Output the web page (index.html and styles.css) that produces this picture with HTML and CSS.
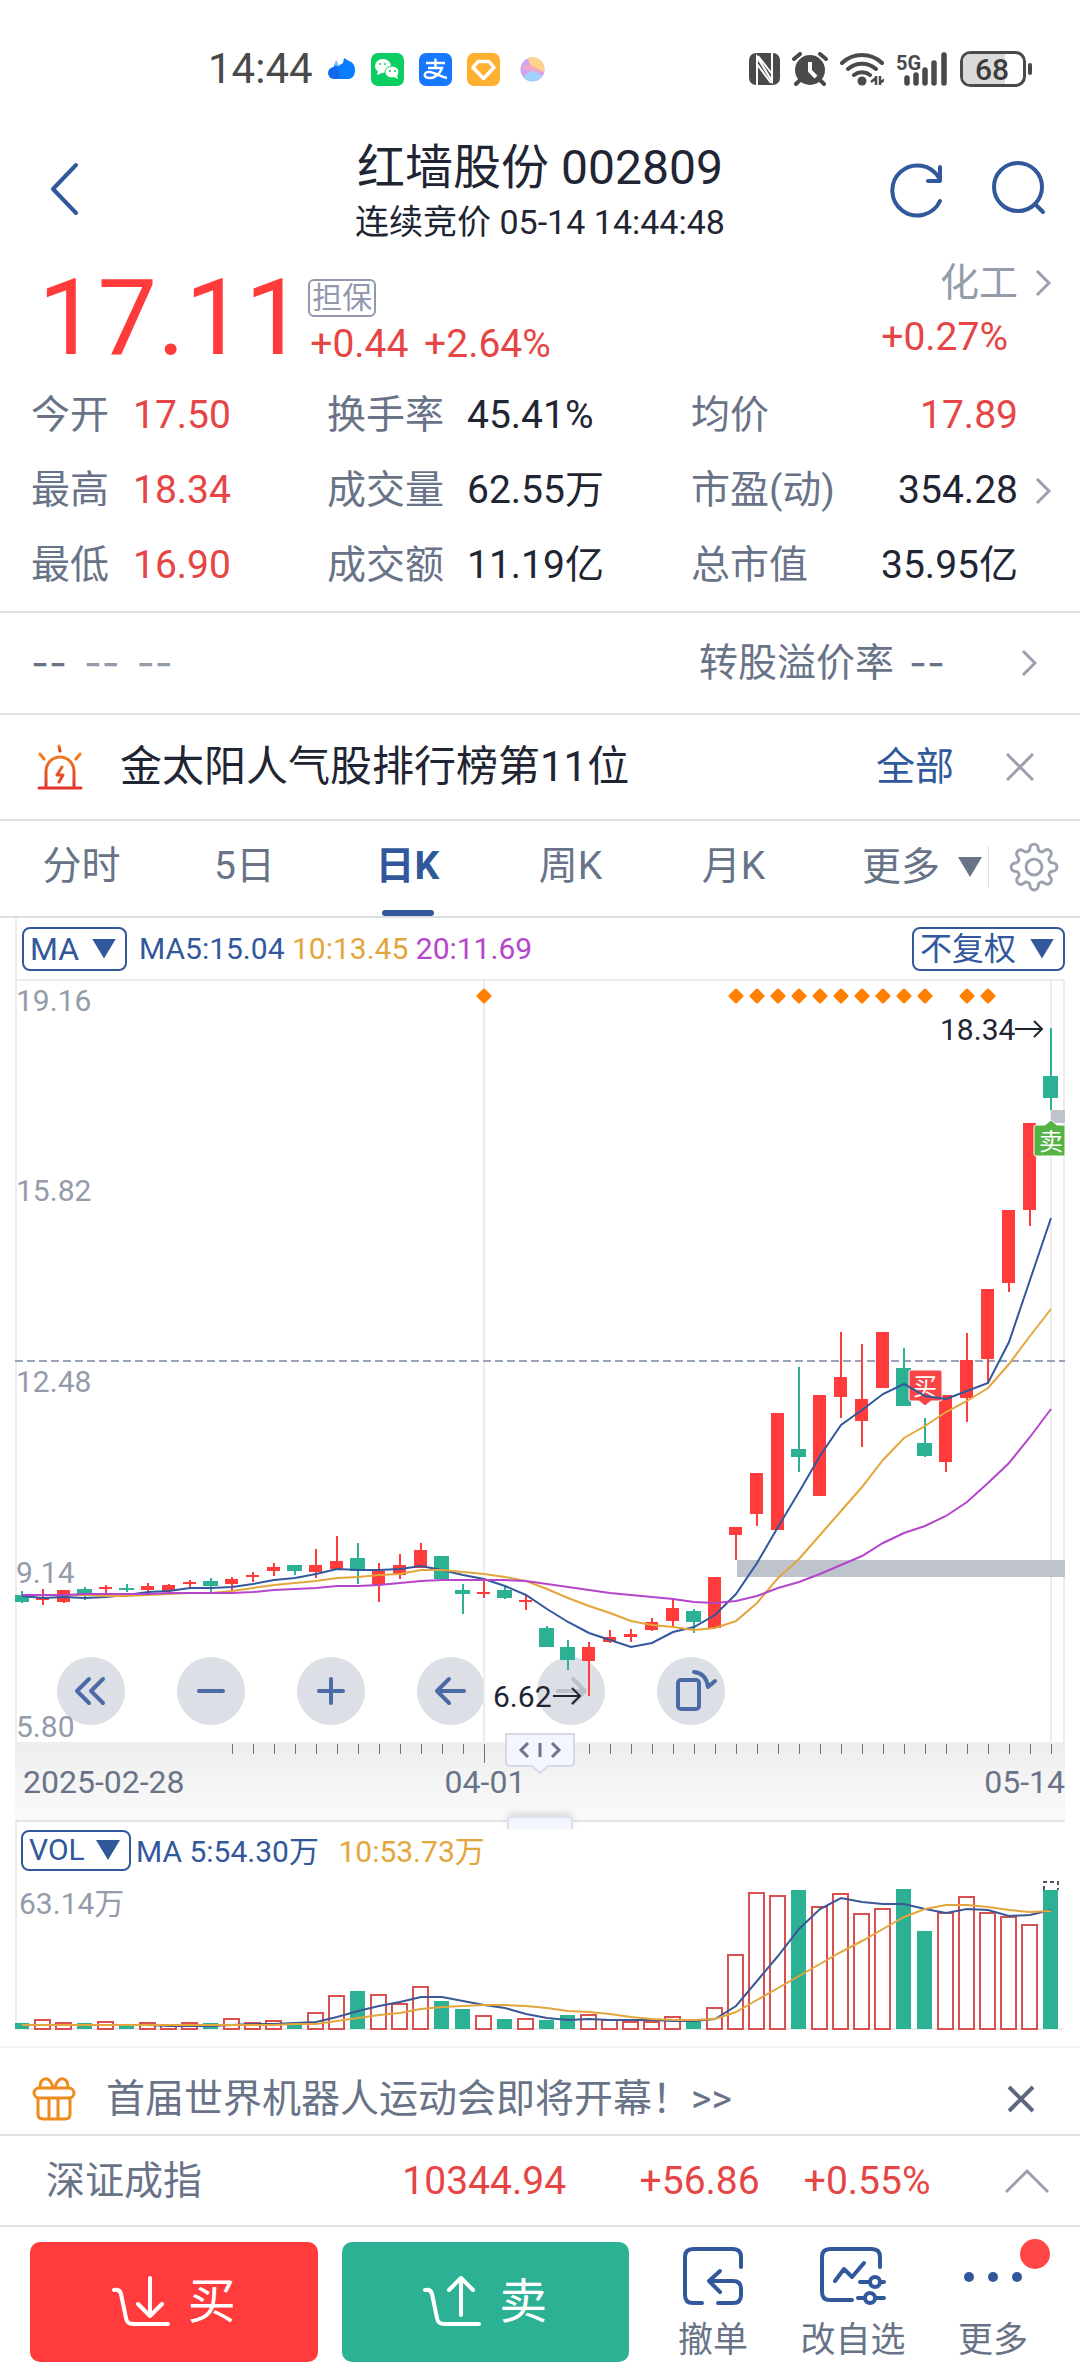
FILE: index.html
```
<!DOCTYPE html>
<html lang="zh-CN">
  <head>
    <meta charset="utf-8">
    <meta name="viewport" content="width=device-width, initial-scale=1.0">
    <title>红墙股份 002809</title>
    <link rel="stylesheet" href="styles.css">
  </head>

  <body>
    <div class="status-bar">
      <div class="status-left">
        <span class="clock">14:44</span>
        <svg width="28" height="24" viewBox="0 0 28 24"><path d="M7 22a6 6 0 0 1-2-11l2-5 3 3 5-3 1-5 5 3c4 1 6 5 6 9 0 6-3 9-7 9z" fill="#0a7cff"/><circle cx="6" cy="16" r="6" fill="#1268e8"/><path d="M6 9l2-6 3 5z" fill="#7cc0f5"/></svg>
        <svg width="33" height="33" viewBox="0 0 33 33"><rect width="33" height="33" rx="7" fill="#0bce62"/><ellipse cx="12" cy="13" rx="8" ry="7" fill="#fff"/><path d="M7 18l-1 4 5-2z" fill="#fff"/><ellipse cx="21" cy="19" rx="7" ry="6" fill="#fff" stroke="#0bce62"/><path d="M23 24l4 2-1-4z" fill="#fff"/><g fill="#0bce62"><circle cx="9" cy="11" r="1"/><circle cx="14" cy="11" r="1"/><circle cx="19" cy="18" r="1"/><circle cx="24" cy="18" r="1"/></g></svg>
        <svg width="33" height="33" viewBox="0 0 33 33"><rect width="33" height="33" rx="7" fill="#1677ff"/><path d="M7 10h19M16.500 5.500v9M9 15h14c-2 6-7 10-12 10-8 0-6-7 0-6 5 1 10 4 17 6" fill="none" stroke="#fff" stroke-width="2.400"/></svg>
        <svg width="33" height="33" viewBox="0 0 33 33"><rect width="33" height="33" rx="7" fill="#ffb02e"/><path d="M11 8.500h11l5 6-10.500 11L6 14.500z" fill="none" stroke="#fff" stroke-width="3.500" stroke-linejoin="round"/></svg>
        <svg class="orb" width="25" height="25" viewBox="0 0 25 25"><circle cx="12.500" cy="12.500" r="12" fill="#cfa3f0"/><path d="M8 1a12 12 0 0 1 16 14L10 8z" fill="#ffd38a"/><path d="M1 9l9-1 14 7-10 2z" fill="#f7a6c4"/><path d="M3 20l9-7 10 6a12 12 0 0 1-19 1z" fill="#9fd4ff"/></svg>
      </div>
      <div class="status-right">
        <svg width="31" height="32" viewBox="0 0 31 32"><rect width="31" height="32" rx="7" fill="#4a4a4a"/><path d="M8 32V4l15 24V0M8 11l14 19M9 3l14 18" fill="none" stroke="#fff" stroke-width="2"/></svg>
        <svg width="36" height="34" viewBox="0 0 36 34"><circle cx="18" cy="18" r="15" fill="#4a4a4a"/><path d="M2 7l6-5M34 7l-6-5M8 28l-4 4M28 28l4 4" stroke="#4a4a4a" stroke-width="4" stroke-linecap="round"/><path d="M18 10v9l6 6" fill="none" stroke="#fff" stroke-width="4"/></svg>
        <svg width="44" height="34" viewBox="0 0 44 34"><g fill="none" stroke="#4a4a4a" stroke-width="4" stroke-linecap="round"><path d="M2 11a29 29 0 0 1 40 0M8 17a21 21 0 0 1 28 0M14 23a13 13 0 0 1 16 0"/></g><circle cx="22" cy="29" r="4.500" fill="#4a4a4a"/><path d="M36 24v9M40 24v9M31 30l5-4M45 27l-5 4" stroke="#4a4a4a" stroke-width="2.500"/></svg>
        <svg class="signal" width="52" height="36" viewBox="0 0 52 36"><text x="0" y="19">5G</text><path d="M11 27v5M20 24v8M29 19v13M38 12v20M48 4v28" stroke="#4a4a4a" stroke-width="5.500" stroke-linecap="round"/></svg>
        <svg class="battery" width="74" height="36" viewBox="0 0 74 36"><rect x="1.500" y="1.500" width="63" height="33" rx="9" fill="#fff" stroke="#4a4a4a" stroke-width="3"/><path d="M10 3h35v30H10a7 7 0 0 1-7-7V10a7 7 0 0 1 7-7z" fill="#dadada"/><text x="15" y="29">68</text><path d="M70 14v8" stroke="#4a4a4a" stroke-width="4" stroke-linecap="round"/></svg>
      </div>
    </div>

    <header class="title-bar">
      <button class="icon-btn" aria-label="返回"><svg width="32" height="54" viewBox="0 0 32 54"><path d="M28 3L5 27l23 24" class="line"/></svg></button>
      <div class="title">
        <h1>红墙股份 002809</h1>
        <p>连续竞价 05-14 14:44:48</p>
      </div>
      <div class="title-tools">
        <button class="icon-btn" aria-label="刷新"><svg width="56" height="58" viewBox="0 0 56 58"><path d="M51 41A25 25 0 1 1 50 18M51 7v14H39" class="line"/></svg></button>
        <button class="icon-btn" aria-label="搜索"><svg width="56" height="58" viewBox="0 0 56 58"><circle cx="27" cy="27" r="24" class="line"/><path d="M44 44l8 8" class="line"/></svg></button>
      </div>
    </header>

    <section class="quote">
      <strong class="price">17.11</strong>
      <div class="change">
        <span class="tag">担保</span>
        <p>+0.44 <span>+2.64%</span></p>
      </div>
      <a class="industry" href="#industry">
        <span>化工</span>
        <em>+0.27%</em>
        <svg class="chevron" width="16" height="28" viewBox="0 0 16 28"><path d="M2 2l12 12L2 26"/></svg>
      </a>
    </section>

    <section class="stats">
      <dl>
        <div><dt>今开</dt><dd class="up">17.50</dd></div>
        <div><dt>最高</dt><dd class="up">18.34</dd></div>
        <div><dt>最低</dt><dd class="up">16.90</dd></div>
      </dl>
      <dl>
        <div><dt>换手率</dt><dd>45.41%</dd></div>
        <div><dt>成交量</dt><dd>62.55万</dd></div>
        <div><dt>成交额</dt><dd>11.19亿</dd></div>
      </dl>
      <dl class="spread">
        <div><dt>均价</dt><dd class="up">17.89</dd></div>
        <div><dt>市盈(动)</dt><dd>354.28</dd></div>
        <div><dt>总市值</dt><dd>35.95亿</dd></div>
      </dl>
      <a href="#detail" aria-label="更多指标"><svg class="chevron" width="16" height="28" viewBox="0 0 16 28"><path d="M2 2l12 12L2 26"/></svg></a>
    </section>

    <a class="row bond" href="#bond">
      <span class="dashes"><b>--</b><i>--</i><i>--</i></span>
      <span class="premium">转股溢价率<b>--</b></span>
      <svg class="chevron" width="16" height="28" viewBox="0 0 16 28"><path d="M2 2l12 12L2 26"/></svg>
    </a>

    <section class="row notice">
      <svg width="46" height="46" viewBox="0 0 46 46">
        <defs><linearGradient id="alarm" x1="0" y1="0" x2="0" y2="1"><stop offset="0" stop-color="#f08020"/><stop offset="1" stop-color="#e0352b"/></linearGradient></defs>
        <g fill="none" stroke="url(#alarm)" stroke-width="3" stroke-linecap="round" stroke-linejoin="round"><path d="M9 43V27a14 14 0 0 1 28 0v16M2 44h42M3 10l4 5M43 10l-4 5M25 23l-5 8h6l-4 7"/><path d="M22 2l1 5"/></g>
      </svg>
      <p>金太阳人气股排行榜第11位</p>
      <a href="#all">全部</a>
      <button class="icon-btn" aria-label="关闭"><svg class="close" width="28" height="28" viewBox="0 0 28 28"><path d="M1 1l26 26M27 1L1 27"/></svg></button>
    </section>

    <nav class="tabs">
      <button>分时</button>
      <button>5日</button>
      <button class="active">日K</button>
      <button>周K</button>
      <button>月K</button>
      <div class="tabs-more">
        <button class="more">更多</button>
        <button class="icon-btn" aria-label="设置"><svg class="gear" width="50" height="50" viewBox="0 0 24 24"><circle cx="12" cy="12" r="3.800"/><path d="M19.4 15a1.65 1.65 0 0 0 .33 1.82l.06.06a2 2 0 0 1 0 2.83 2 2 0 0 1-2.83 0l-.06-.06a1.65 1.65 0 0 0-1.82-.33 1.65 1.65 0 0 0-1 1.51V21a2 2 0 0 1-2 2 2 2 0 0 1-2-2v-.09A1.65 1.65 0 0 0 9 19.4a1.65 1.65 0 0 0-1.82.33l-.06.06a2 2 0 0 1-2.83 0 2 2 0 0 1 0-2.83l.06-.06a1.65 1.65 0 0 0 .33-1.82 1.65 1.65 0 0 0-1.51-1H3a2 2 0 0 1-2-2 2 2 0 0 1 2-2h.09A1.65 1.65 0 0 0 4.6 9a1.65 1.65 0 0 0-.33-1.82l-.06-.06a2 2 0 0 1 0-2.83 2 2 0 0 1 2.83 0l.06.06a1.65 1.65 0 0 0 1.82.33H9a1.65 1.65 0 0 0 1-1.51V3a2 2 0 0 1 2-2 2 2 0 0 1 2 2v.09a1.65 1.65 0 0 0 1 1.51 1.65 1.65 0 0 0 1.82-.33l.06-.06a2 2 0 0 1 2.83 0 2 2 0 0 1 0 2.83l-.06.06a1.65 1.65 0 0 0-.33 1.82V9a1.65 1.65 0 0 0 1.51 1H21a2 2 0 0 1 2 2 2 2 0 0 1-2 2h-.09a1.65 1.65 0 0 0-1.51 1z"/></svg></button>
      </div>
    </nav>

    <section class="chart">
      <div class="legend">
        <label class="picker pick-ma"><select aria-label="主图指标"><option>MA</option></select></label>
        <p><span class="ma5">MA5:15.04</span> <span class="ma10">10:13.45</span> <span class="ma20">20:11.69</span></p>
        <label class="picker pick-adj"><select aria-label="复权"><option>不复权</option></select></label>
      </div>

      <div class="plot">
        <div class="plot-tools">
          <button aria-label="最早"><svg viewBox="0 0 68 68"><path d="M32 22L20 34l12 12M46 22L34 34l12 12"/></svg></button>
          <button aria-label="缩小"><svg viewBox="0 0 68 68"><path d="M22 34h24"/></svg></button>
          <button aria-label="放大"><svg viewBox="0 0 68 68"><path d="M22 34h24M34 22v24"/></svg></button>
          <button aria-label="左移"><svg viewBox="0 0 68 68"><path d="M47 34H21M32 22L20 34l12 12"/></svg></button>
          <button aria-label="右移" class="off"><svg viewBox="0 0 68 68"><path d="M21 34h26M36 22l12 12-12 12"/></svg></button>
          <button aria-label="横屏"><svg viewBox="0 0 68 68"><rect x="21" y="23" width="21" height="29" rx="3"/><path d="M37 15c9 1 13 7 14 15M51 30l7-6"/></svg></button>
        </div>
        <svg id="kline" viewBox="15 981 1050 761"></svg>
      </div>

      <div class="axis">
        <svg id="ticks" viewBox="15 1742 1050 24"></svg>
        <div class="dates"><span>2025-02-28</span><span class="mid">04-01</span><span>05-14</span></div>
        <svg class="handle" width="76" height="48" viewBox="0 0 76 48"><path d="M4 3h68v28q0 4-4 4H46l-8 7-8-7H8q-4 0-4-4z" fill="#f3f6fe" stroke="#d5d9e2" stroke-width="2"/><path d="M26 12l-7 7 7 7M38 12v14M50 12l7 7-7 7" fill="none" stroke="#6b7489" stroke-width="3"/></svg>
        <span class="grip"></span>
      </div>

      <div class="legend vol-legend">
        <label class="picker pick-vol"><select aria-label="副图指标"><option>VOL</option></select></label>
        <p><span class="ma5">MA 5:54.30万</span> <span class="ma10">10:53.73万</span></p>
      </div>
      <svg id="volume" viewBox="15 1881 1050 149"></svg>
    </section>

    <section class="row promo">
      <svg width="44" height="44" viewBox="0 0 44 44"><g fill="none" stroke="#ef8a1d" stroke-width="3" stroke-linejoin="round"><rect x="2" y="11" width="40" height="10" rx="5"/><path d="M6 21v16q0 5 5 5h22q5 0 5-5V21M17 22v19M26 22v19M8 11c0-11 9-13 13-1l1 1 1-1c4-12 13-10 13 1"/></g></svg>
      <a href="#promo">首届世界机器人运动会即将开幕！&gt;&gt;</a>
      <button class="icon-btn" aria-label="关闭"><svg class="close bold" width="28" height="28" viewBox="0 0 28 28"><path d="M2 2l24 24M26 2L2 26"/></svg></button>
    </section>

    <section class="row index">
      <span>深证成指</span>
      <span class="up">10344.94</span>
      <span class="up">+56.86</span>
      <span class="up">+0.55%</span>
      <button class="icon-btn" aria-label="展开"><svg class="chevron" width="44" height="26" viewBox="0 0 44 26"><path d="M1 24L22 3l21 21"/></svg></button>
    </section>

    <footer class="actions">
      <button class="trade buy"><svg width="58" height="52" viewBox="0 0 58 52"><path d="M2 14q6-1 7 4l5 24q1 6 7 6h35M38 2v37M26 28l12 12 12-12"/></svg>买</button>
      <button class="trade sell"><svg width="58" height="52" viewBox="0 0 58 52"><path d="M2 14q6-1 7 4l5 24q1 6 7 6h35M38 39V2M26 14L38 2l12 12"/></svg>卖</button>
      <div class="menu">
        <button><svg width="60" height="60" viewBox="0 0 60 60"><path d="M19 56H10q-8 0-8-8V10q0-8 8-8h40q8 0 8 8v10M35 56h15q8 0 8-8v-6q0-8-8-8H26M37 24L26 34l11 11"/></svg>撤单</button>
        <button><svg width="66" height="60" viewBox="0 0 66 60"><path d="M32 53H10q-8 0-8-8V10q0-8 8-8h42q8 0 8 8v10M15 34l9-12 8 8 12-14M40 35h9M61 35h3M38 51h6M56 51h8"/><circle cx="55" cy="35" r="5"/><circle cx="50" cy="51" r="5"/></svg>改自选</button>
        <button class="has-dot"><svg width="60" height="60" viewBox="0 0 60 60"><g class="dots"><circle cx="6" cy="30" r="5"/><circle cx="30" cy="30" r="5"/><circle cx="54" cy="30" r="5"/></g></svg>更多</button>
      </div>
    </footer>

    <script src="chart.js"></script>
  </body>
</html>
```

FILE: styles.css
```
* {
  box-sizing: border-box;
  margin: 0;
  padding: 0;
}

body {
  font-family: Roboto, "Noto Sans CJK SC", sans-serif;
  font-size: 39px;
  line-height: 48px;
  color: #1f2533;
  background: #fff;
}

a {
  color: inherit;
  text-decoration: none;
}

button, select {
  font: inherit;
  color: inherit;
  background: none;
  border: 0;
}

em, i {
  font-style: normal;
}

svg {
  display: block;
  flex: none;
}

.up {
  color: #e64545;
}

.icon-btn {
  display: flex;
}

.line {
  fill: none;
  stroke: #32589c;
  stroke-width: 4;
  stroke-linecap: round;
  stroke-linejoin: round;
}

.chevron path, .close path {
  fill: none;
  stroke: #9a9ead;
  stroke-width: 3;
}

.close.bold path {
  stroke: #5c667c;
  stroke-width: 4;
}

/* status bar */

.status-bar {
  display: flex;
  justify-content: space-between;
  align-items: center;
  height: 138px;
  padding: 0 46px 0 208px;
}

.status-left, .status-right {
  display: flex;
  align-items: center;
  gap: 15px;
}

.clock {
  font-size: 42px;
  color: #4a4a4a;
}

.orb {
  margin-left: 5px;
}

.status-right {
  gap: 12px;
}

.signal text {
  font-size: 20px;
  font-weight: 700;
  fill: #4a4a4a;
}

.battery text {
  font-size: 30px;
  font-weight: 500;
  fill: #3c3c3c;
}

/* title */

.title-bar {
  display: grid;
  grid-template-columns: 1fr auto 1fr;
  height: 108px;
  padding: 0 33px;
}

.title-bar .icon-btn {
  align-self: start;
  padding-top: 22px;
}

.title-bar > .icon-btn {
  padding-top: 24px;
  padding-left: 15px;
}

.title {
  text-align: center;
}

.title h1 {
  font-size: 48px;
  font-weight: 400;
  line-height: 60px;
}

.title p {
  font-size: 34px;
  line-height: 48px;
}

.title-tools {
  display: flex;
  justify-content: flex-end;
  gap: 46px;
}

/* price */

.quote {
  display: flex;
  height: 130px;
  padding: 0 29px 0 38px;
}

.price {
  margin-top: 14px;
  font-size: 106px;
  font-weight: 400;
  line-height: 116px;
  color: #ff3b3b;
}

.change {
  padding: 33px 0 0 4px;
}

.tag {
  display: block;
  width: 68px;
  height: 38px;
  border: 2px solid #9498ae;
  border-radius: 6px;
  font-size: 30px;
  line-height: 34px;
  text-align: center;
  color: #9498ae;
}

.change p {
  padding-left: 2px;
  line-height: 54px;
  color: #e64545;
}

.change p span {
  margin-left: 6px;
}

.industry {
  display: grid;
  grid-template-columns: auto 16px;
  grid-template-rows: 48px 60px;
  column-gap: 17px;
  align-items: center;
  margin-left: auto;
  padding-top: 13px;
  text-align: right;
  color: #949baa;
}

.industry em {
  grid-row: 2;
  padding-right: 10px;
  color: #e64545;
}

.industry .chevron {
  grid-column: 2;
  grid-row: 1;
}

.stats {
  display: grid;
  grid-template-columns: 296fr 364fr 344fr 16px;
  align-items: center;
  padding: 2px 29px 8px 31px;
  border-bottom: 2px solid #e2e3e6;
}

.stats dl div {
  display: flex;
  height: 75px;
  line-height: 75px;
}

.stats dt {
  width: 102px;
  color: #697388;
}

.stats dl:nth-child(2) dt {
  width: 140px;
}

.stats .spread div {
  justify-content: space-between;
}

.stats .spread {
  padding-right: 17px;
}

.stats .spread dt {
  width: auto;
}

/* full width rows */

.row {
  display: flex;
  align-items: center;
  border-bottom: 2px solid #e2e3e6;
}

.bond {
  height: 102px;
  padding: 0 43px 0 31px;
  gap: 76px;
  color: #697388;
}

.bond b, .bond i {
  font-family: Inter, sans-serif;
  font-weight: 400;
}

.dashes {
  display: flex;
  flex: 1;
  gap: 17px;
}

.dashes i {
  color: #949baa;
}

.premium {
  display: flex;
  gap: 15px;
}

.notice {
  height: 106px;
  padding: 0 46px 0 37px;
}

.notice p {
  flex: 1;
  padding-left: 37px;
  font-size: 42px;
}

.notice a {
  padding-right: 52px;
  color: #32589c;
}

/* period tabs */

.tabs {
  display: grid;
  grid-template-columns: repeat(5, 163fr) 265fr;
  height: 97px;
  border-bottom: 2px solid #dcdee2;
  color: #697388;
}

.tabs > button {
  position: relative;
  padding-bottom: 5px;
}

.tabs .active {
  font-weight: 700;
  color: #32589c;
}

.tabs .active::after {
  content: '';
  position: absolute;
  bottom: 0;
  left: 50%;
  width: 52px;
  height: 6px;
  margin-left: -26px;
  border-radius: 3px;
  background: #32589c;
}

.tabs-more {
  display: flex;
  justify-content: space-between;
  align-items: center;
  padding: 0 21px 3px 47px;
}

.more {
  display: flex;
  align-items: center;
  gap: 18px;
  height: 42px;
  padding-right: 6px;
  border-right: 1px solid #dcdee2;
}

.more::after, .picker::after {
  content: '';
  width: 24px;
  height: 20px;
  background: #697388;
  clip-path: polygon(0 0, 100% 0, 50% 100%);
}

.gear {
  fill: none;
  stroke: #9ba1b0;
  stroke-width: 1.4;
}

/* charts */

.chart {
  margin: 0 15px;
}

.legend {
  display: flex;
  align-items: center;
  height: 63px;
  padding-left: 5px;
  border: 2px solid #ececee;
  border-top: 0;
  border-right: 0;
  font-size: 30px;
}

.legend p {
  flex: 1;
  padding-left: 12px;
}

.picker {
  display: flex;
  align-items: center;
  justify-content: space-between;
  height: 44px;
  padding: 0 9px 0 6px;
  border: 2px solid #32589c;
  border-radius: 8px;
  color: #32589c;
}

.picker::after {
  background: #32589c;
}

.picker select {
  flex: 1;
  min-width: 0;
  appearance: none;
}

.pick-ma {
  width: 105px;
  font-size: 32px;
}

.pick-adj {
  width: 153px;
  font-size: 32px;
}

.pick-vol {
  width: 110px;
  height: 41px;
}

.ma5 { color: #32589c; }
.ma10 { color: #e3a63c; }
.ma20 { color: #b546cb; }

.plot {
  position: relative;
}

.plot-tools {
  position: absolute;
  left: 4%;
  bottom: 17px;
  display: flex;
  gap: 52px;
}

.plot-tools button {
  width: 68px;
  height: 68px;
  border-radius: 50%;
  background: #dddfe6;
}

.plot-tools svg {
  fill: none;
  stroke: #4b6aa6;
  stroke-width: 4;
  stroke-linecap: round;
  stroke-linejoin: round;
}

.plot-tools .off svg {
  stroke: #bcc0cb;
}

#kline {
  position: relative;
  width: 100%;
  pointer-events: none;
}

#volume, #ticks {
  width: 100%;
}

#kline text, #volume text {
  font-size: 30px;
  fill: #949baa;
}

#kline .mark {
  fill: #1f2533;
}

#kline .deal {
  font-size: 24px;
  fill: #fff;
}

.axis {
  position: relative;
  height: 78px;
  background: linear-gradient(#eeeeee, #fafafa);
}

.dates {
  display: grid;
  grid-template-columns: 1fr auto 1fr;
  padding: 0 0 0 8px;
  font-size: 32px;
  line-height: 32px;
  color: #697388;
}

.dates span:last-child {
  text-align: right;
}

.dates .mid {
  padding-right: 118px;
}

.handle {
  position: absolute;
  left: 50%;
  top: -11px;
  margin-left: -38px;
}

.grip {
  position: absolute;
  left: 50%;
  bottom: -9px;
  width: 66px;
  height: 13px;
  margin-left: -33px;
  border: 2px solid #dde1ea;
  border-bottom: 0;
  border-radius: 5px 5px 0 0;
  background: #f3f6fe;
  box-shadow: 0 -3px 6px #d9d9d9;
}

.vol-legend {
  height: 61px;
  padding: 0 0 3px 4px;
  border-top: 2px solid #e2e3e6;
  border-bottom: 0;
}

.vol-legend p {
  padding: 4px 0 0 5px;
}

.vol-legend .ma10 {
  margin-left: 12px;
}

.promo {
  height: 90px;
  margin-top: 16px;
  padding: 16px 45px 0 32px;
  border-top: 2px solid #f3f3f5;
  color: #697388;
}

.promo a {
  flex: 1;
  padding-left: 30px;
}

.index {
  display: grid;
  grid-template-columns: 356fr 237fr 164fr 201fr 44px;
  height: 91px;
  padding: 0 31px 0 46px;
  color: #697388;
}

.index .up {
  color: #e64545;
}

/* bottom bar */

.actions {
  display: flex;
  gap: 24px;
  padding: 15px 17px 14px 30px;
}

.trade {
  display: flex;
  flex: 1;
  align-items: center;
  justify-content: center;
  gap: 18px;
  height: 120px;
  border-radius: 10px;
  font-size: 48px;
  color: #fff;
}

.trade svg {
  fill: none;
  stroke: #fff;
  stroke-width: 4;
  stroke-linecap: round;
  stroke-linejoin: round;
}

.buy {
  background: #ff3b3b;
}

.sell {
  background: #2db195;
}

.menu {
  display: grid;
  grid-template-columns: repeat(3, 140px);
  margin-left: -10px;
  font-size: 35px;
  line-height: 42px;
  color: #697388;
}

.menu button {
  position: relative;
  display: flex;
  flex-direction: column;
  align-items: center;
  gap: 13px;
  padding-top: 5px;
}

.menu svg {
  fill: none;
  stroke: #32589c;
  stroke-width: 4;
  stroke-linecap: round;
  stroke-linejoin: round;
}

.menu .dots {
  fill: #32589c;
  stroke: none;
}

.has-dot::after {
  content: '';
  position: absolute;
  top: -3px;
  right: 13px;
  width: 30px;
  height: 30px;
  border-radius: 50%;
  background: #ff4747;
}
```

FILE: chart.js
```
// one trading day every 21 units, y grows downwards
var FIRST = 22, STEP = 21;
var RED = '#ff3b3b', GREEN = '#2db195';

// colour, high, body top, body bottom, low, top of the volume bar
var days = [
  ['g',1591,1595,1602,1603,2023], ['r',1589,1597,1600,1605,2019], ['r',1590,1590,1602,1603,2022],
  ['g',1587,1589,1594,1600,2023], ['r',1585,1587,1589,1594,2021], ['g',1584,1588,1590,1592,2024],
  ['r',1583,1586,1590,1592,2022], ['r',1584,1585,1591,1592,2024], ['r',1580,1582,1584,1587,2022],
  ['g',1578,1581,1586,1594,2023], ['r',1577,1579,1584,1591,2018], ['r',1572,1575,1577,1582,2022],
  ['r',1563,1567,1571,1576,2020], ['g',1565,1565,1571,1575,2024], ['r',1549,1565,1572,1578,2012],
  ['r',1536,1561,1569,1569,1995], ['g',1543,1558,1571,1584,1991], ['r',1563,1571,1585,1602,1994],
  ['r',1554,1565,1575,1579,2003], ['r',1543,1550,1568,1568,1986], ['g',1556,1556,1579,1581,2001],
  ['g',1584,1590,1594,1614,2009], ['r',1580,1592,1593,1598,2015], ['g',1586,1590,1598,1599,2019],
  ['r',1595,1600,1602,1610,2018], ['g',1626,1628,1647,1647,2020], ['g',1640,1647,1660,1670,2015],
  ['r',1642,1647,1661,1696,2014], ['r',1630,1637,1642,1643,2019], ['r',1629,1634,1637,1642,2021],
  ['r',1618,1622,1630,1631,2021], ['r',1599,1608,1621,1627,2016], ['g',1609,1611,1622,1633,2021],
  ['r',1577,1577,1628,1628,2007], ['r',1527,1527,1535,1560,1954], ['r',1473,1473,1514,1526,1892],
  ['r',1413,1413,1530,1530,1895], ['g',1367,1449,1457,1472,1890], ['r',1395,1395,1496,1496,1906],
  ['r',1332,1377,1397,1418,1893], ['r',1344,1399,1421,1447,1913], ['r',1332,1332,1388,1388,1908],
  ['g',1348,1368,1406,1406,1889], ['g',1418,1443,1456,1457,1931], ['r',1395,1395,1462,1472,1912],
  ['r',1333,1360,1398,1422,1896], ['r',1289,1289,1359,1382,1912], ['r',1210,1210,1283,1292,1916],
  ['r',1123,1123,1210,1226,1924], ['g',1028,1076,1098,1110,1890]
];

var ma5 = [1596,1598,1597,1598,1597,1595,1592,1591,1588,1588,1587,1584,1580,1578,1574,1569,1570,1570,1569,1566,1570,1575,1579,1586,1595,1609,1622,1633,1640,1647,1643,1632,1627,1615,1594,1563,1527,1492,1456,1425,1410,1394,1384,1396,1399,1391,1383,1342,1280,1218];
var ma10 = [1595,1595,1595,1595,1596,1596,1595,1594,1593,1593,1591,1588,1585,1583,1581,1578,1577,1575,1574,1570,1570,1572,1574,1577,1581,1589,1598,1606,1613,1621,1625,1627,1630,1628,1621,1603,1578,1559,1535,1511,1487,1460,1438,1426,1412,1401,1388,1364,1336,1309];
var ma20 = [1595,1595,1595,1594,1594,1594,1594,1593,1593,1593,1593,1592,1590,1589,1588,1586,1586,1585,1583,1581,1580,1580,1580,1580,1581,1584,1587,1590,1593,1595,1597,1599,1602,1603,1601,1596,1588,1582,1574,1565,1556,1543,1533,1526,1516,1502,1483,1463,1437,1409];
var vol5 = [2025,2025,2025,2025,2025,2025,2025,2026,2026,2026,2025,2024,2024,2023,2022,2017,2011,2006,2002,1997,1997,2001,2005,2008,2014,2018,2020,2019,2020,2020,2020,2021,2021,2019,2006,1981,1956,1929,1909,1898,1902,1904,1904,1909,1913,1909,1910,1916,1915,1910];
var vol10 = [2025,2025,2025,2025,2025,2025,2025,2025,2025,2025,2025,2025,2025,2024,2024,2021,2018,2015,2013,2009,2007,2006,2005,2005,2006,2008,2011,2012,2014,2017,2019,2020,2020,2019,2012,2000,1988,1976,1964,1952,1941,1929,1917,1909,1905,1905,1907,1910,1912,1911];

function x(i) { return FIRST + i * STEP; }

function rect(left, top, w, h, fill) {
  return '<rect x="' + left + '" y="' + top + '" width="' + w + '" height="' + h + '" fill="' + fill + '"/>';
}

function path(d, stroke, extra) {
  return '<path d="' + d + '" fill="none" stroke="' + stroke + '" stroke-width="2" ' + (extra || '') + '/>';
}

function line(values, stroke) {
  return path('M' + values.map(function (y, i) { return x(i) + ' ' + y; }).join('L'), stroke);
}

function text(left, base, str, cls) {
  return '<text x="' + left + '" y="' + base + '" class="' + (cls || '') + '">' + str + '</text>';
}

// price chart
var k = path('M16 981V1742M1064 981V1742M484 981V1742M1051 981V1742', '#ececee');
k += rect(737, 1560, 328, 17, '#bfc3cc') + rect(1051, 1110, 14, 13, '#bfc3cc');
k += path('M15 1361H1065', '#99a3bb', 'stroke-dasharray="8 4"');
k += text(16, 1011, '19.16') + text(16, 1201, '15.82') + text(16, 1392, '12.48') + text(16, 1583, '9.14') + text(16, 1737, '5.80');
days.forEach(function (d, i) {
  var c = d[0] == 'r' ? RED : GREEN;
  var w = d[0] == 'r' ? 13 : 15;
  k += rect(x(i) - 1, d[1], 2, d[4] - d[1], c);
  k += rect(x(i) - (w + 1) / 2, d[2], w, Math.max(d[3] - d[2], 2), c);
});
[22, 34, 35, 36, 37, 38, 39, 40, 41, 42, 43, 45, 46].forEach(function (i) {
  k += '<path d="M' + x(i) + ' 990l6 6-6 6-6-6z" fill="#ff8000" stroke="#ff8000" stroke-width="3" stroke-linejoin="round"/>';
});
k += '<path d="M911 1370h29q2 0 2 2v27q0 2-2 2h-9l-6 5-6-5h-8q-2 0-2-2v-27q0-2 2-2z" fill="#f94545" stroke="#fff"/>';
k += text(913, 1395, '买', 'deal');
k += '<path d="M1065 1125h-8l-6-5-6 5h-9q-2 0-2 2v27q0 2 2 2h29z" fill="#55b244" stroke="#fff"/>';
k += text(1039, 1150, '卖', 'deal');
k += line(ma5, '#32589c') + line(ma10, '#e3a63c') + line(ma20, '#b546cb');
k += text(940, 1040, '18.34', 'mark') + path('M1015 1029h26M1034 1021l8 8-8 8', '#1f2533');
k += text(493, 1707, '6.62', 'mark') + path('M553 1696h26M572 1688l8 8-8 8', '#1f2533');
document.getElementById('kline').innerHTML = k;

// date ticks
var t = '';
for (var i = 10; i < days.length; i++) {
  t += rect(x(i), 1744, 1, i == 22 ? 19 : 10, '#697388');
}
document.getElementById('ticks').innerHTML = t;

// volume
var v = path('M16 1881V2029H1064', '#ececee') + text(19, 1914, '63.14万');
days.forEach(function (d, i) {
  if (d[0] == 'r') {
    v += path('M' + (x(i) - 8) + ' ' + (d[5] + 1) + 'h15V2029h-15z', '#d95050');
  } else {
    v += rect(x(i) - 8, d[5], 15, 2029 - d[5], GREEN);
  }
});
v += path('M1044 1890V1882H1058V1890', '#4a5568', 'stroke-dasharray="4 3"');
v += line(vol5, '#3a5796') + line(vol10, '#e3a63c');
document.getElementById('volume').innerHTML = v;
```
